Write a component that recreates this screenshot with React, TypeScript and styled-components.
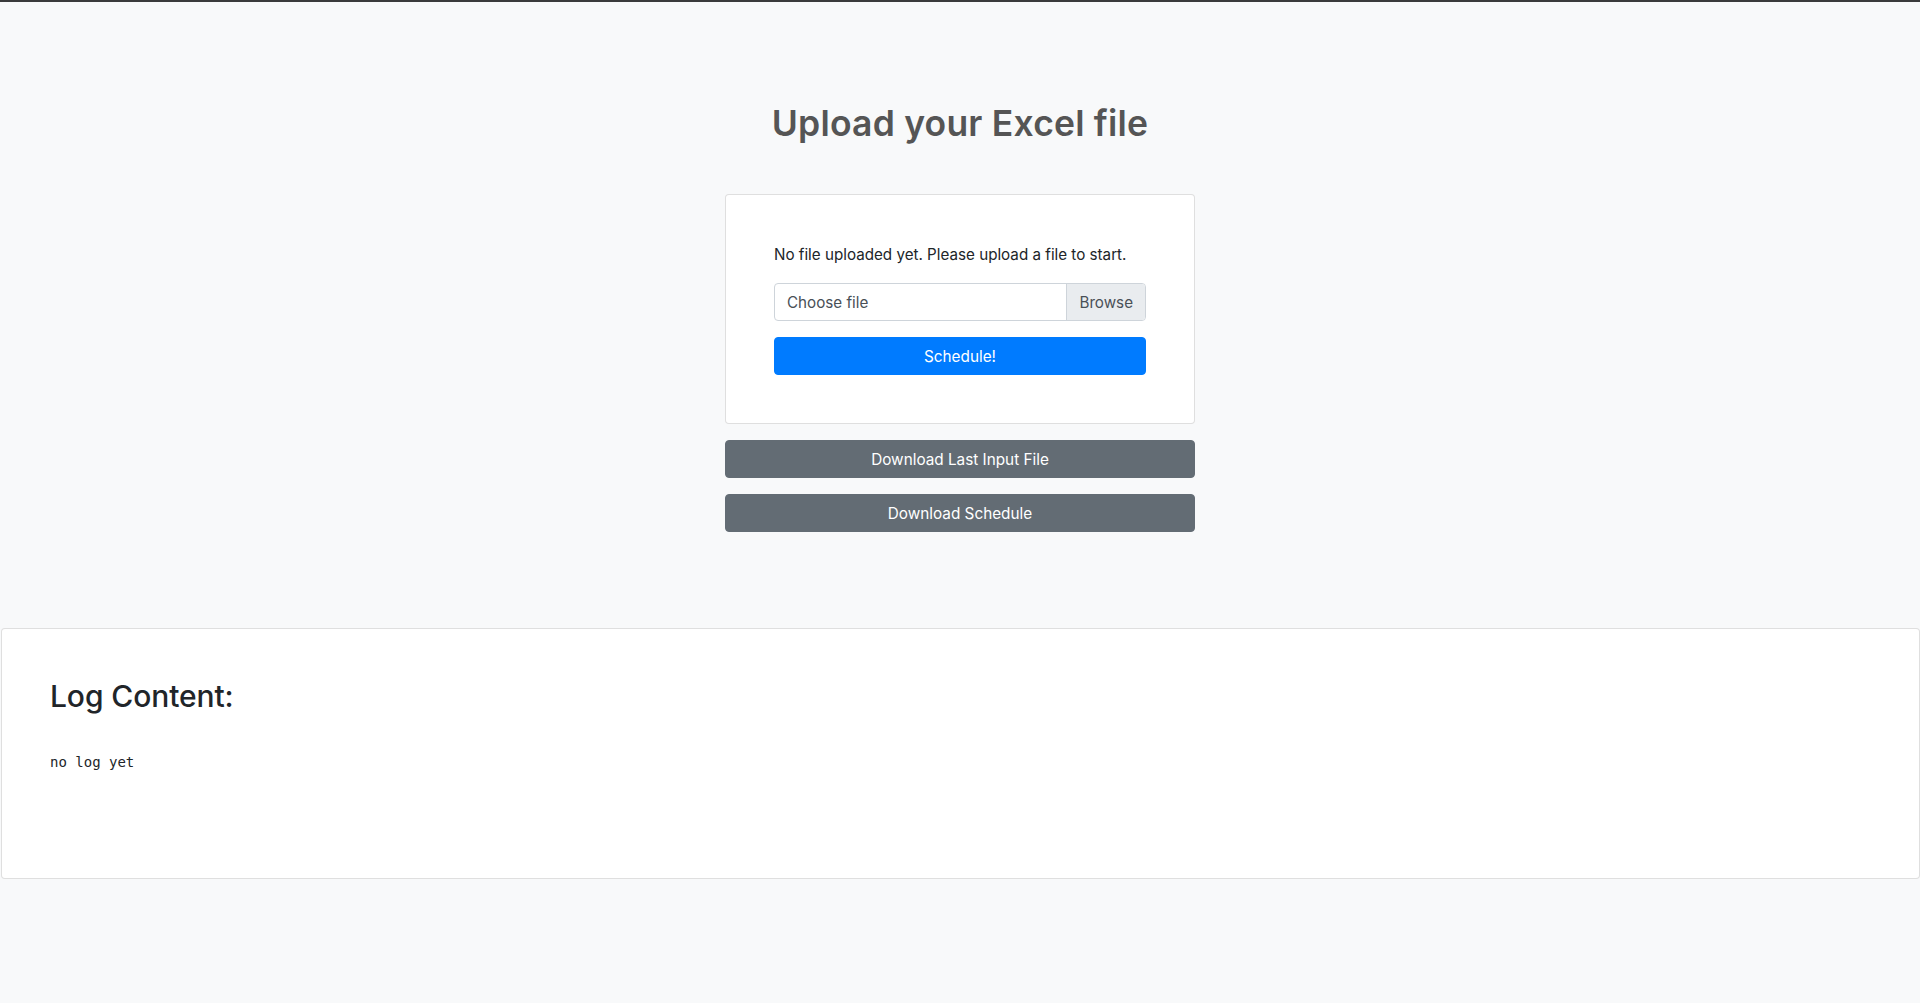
import React from "react";
import styled, { createGlobalStyle } from "styled-components";

const GlobalStyle = createGlobalStyle`
  html, body {
    margin: 0;
    padding: 0;
    background: #f8f9fa;
  }
  body {
    font-family: Inter, "Noto Sans", "Liberation Sans", sans-serif;
    font-size: 15.25px;
    line-height: 1.5;
    color: #212529;
  }
  * { box-sizing: border-box; }
`;

const Page = styled.div`
  min-height: 1003px;
  border-top: 2px solid #3a3b3c;
  background: #f8f9fa;
  display: flex;
  flex-direction: column;
`;

const Hero = styled.section`
  padding-top: 103px;
  display: flex;
  flex-direction: column;
  align-items: center;
`;

const Title = styled.h2`
  margin: 0 0 51px;
  font-size: 35.5px;
  font-weight: 600;
  line-height: 38px;
  color: #555555;
  letter-spacing: 0.2px;
`;

const Panel = styled.div`
  width: 470px;
  display: flex;
  flex-direction: column;
  gap: 16px;
`;

const Card = styled.div`
  background: #ffffff;
  border: 1px solid rgba(0, 0, 0, 0.125);
  border-radius: 4px;
  padding: 48px;
  display: flex;
  flex-direction: column;
  gap: 16px;
`;

const Notice = styled.p`
  margin: 0;
  font-size: 15.2px;
  line-height: 24px;
  color: #212529;
`;

const FileGroup = styled.label`
  display: flex;
  height: 38px;
  border: 1px solid #ced4da;
  border-radius: 4px;
  overflow: hidden;
  background: #fff;
  font-size: 15.2px;
  color: #495057;
  cursor: pointer;
`;

const FileName = styled.span`
  flex: 1;
  display: flex;
  align-items: center;
  padding: 2px 12px 0;
`;

const BrowseTag = styled.span`
  display: flex;
  align-items: center;
  padding: 2px 12px 0;
  background: #e9ecef;
  border-left: 1px solid #ced4da;
`;

const Button = styled.button<{ $variant: "primary" | "secondary" }>`
  height: 38px;
  width: 100%;
  padding: 2px 12px 0;
  border: 1px solid ${(p) => (p.$variant === "primary" ? "#007bff" : "#636c74")};
  border-radius: 4px;
  background: ${(p) => (p.$variant === "primary" ? "#007bff" : "#636c74")};
  color: #ffffff;
  font-family: inherit;
  font-size: 15.3px;
  line-height: 1.5;
  cursor: pointer;
`;

const LogCard = styled.section`
  margin: 96px 0 0 1px;
  height: 251px;
  background: #ffffff;
  border: 1px solid rgba(0, 0, 0, 0.125);
  border-radius: 4px;
  padding: 48px;
`;

const LogTitle = styled.h3`
  margin: 0 0 37px;
  font-size: 30px;
  font-weight: 500;
  line-height: 38px;
  color: #212529;
  letter-spacing: -0.1px;
`;

const LogText = styled.pre`
  margin: 0;
  font-family: "DejaVu Sans Mono", "Liberation Mono", monospace;
  font-size: 14px;
  line-height: 21px;
  color: #212529;
`;

export default function App() {
  return (
    <>
      <GlobalStyle />
      <Page>
        <Hero>
          <Title>Upload your Excel file</Title>
          <Panel>
            <Card>
              <Notice>No file uploaded yet. Please upload a file to start.</Notice>
              <FileGroup>
                <FileName>Choose file</FileName>
                <BrowseTag>Browse</BrowseTag>
              </FileGroup>
              <Button $variant="primary">Schedule!</Button>
            </Card>
            <Button $variant="secondary">Download Last Input File</Button>
            <Button $variant="secondary">Download Schedule</Button>
          </Panel>
        </Hero>
        <LogCard>
          <LogTitle>Log Content:</LogTitle>
          <LogText>no log yet</LogText>
        </LogCard>
      </Page>
    </>
  );
}
